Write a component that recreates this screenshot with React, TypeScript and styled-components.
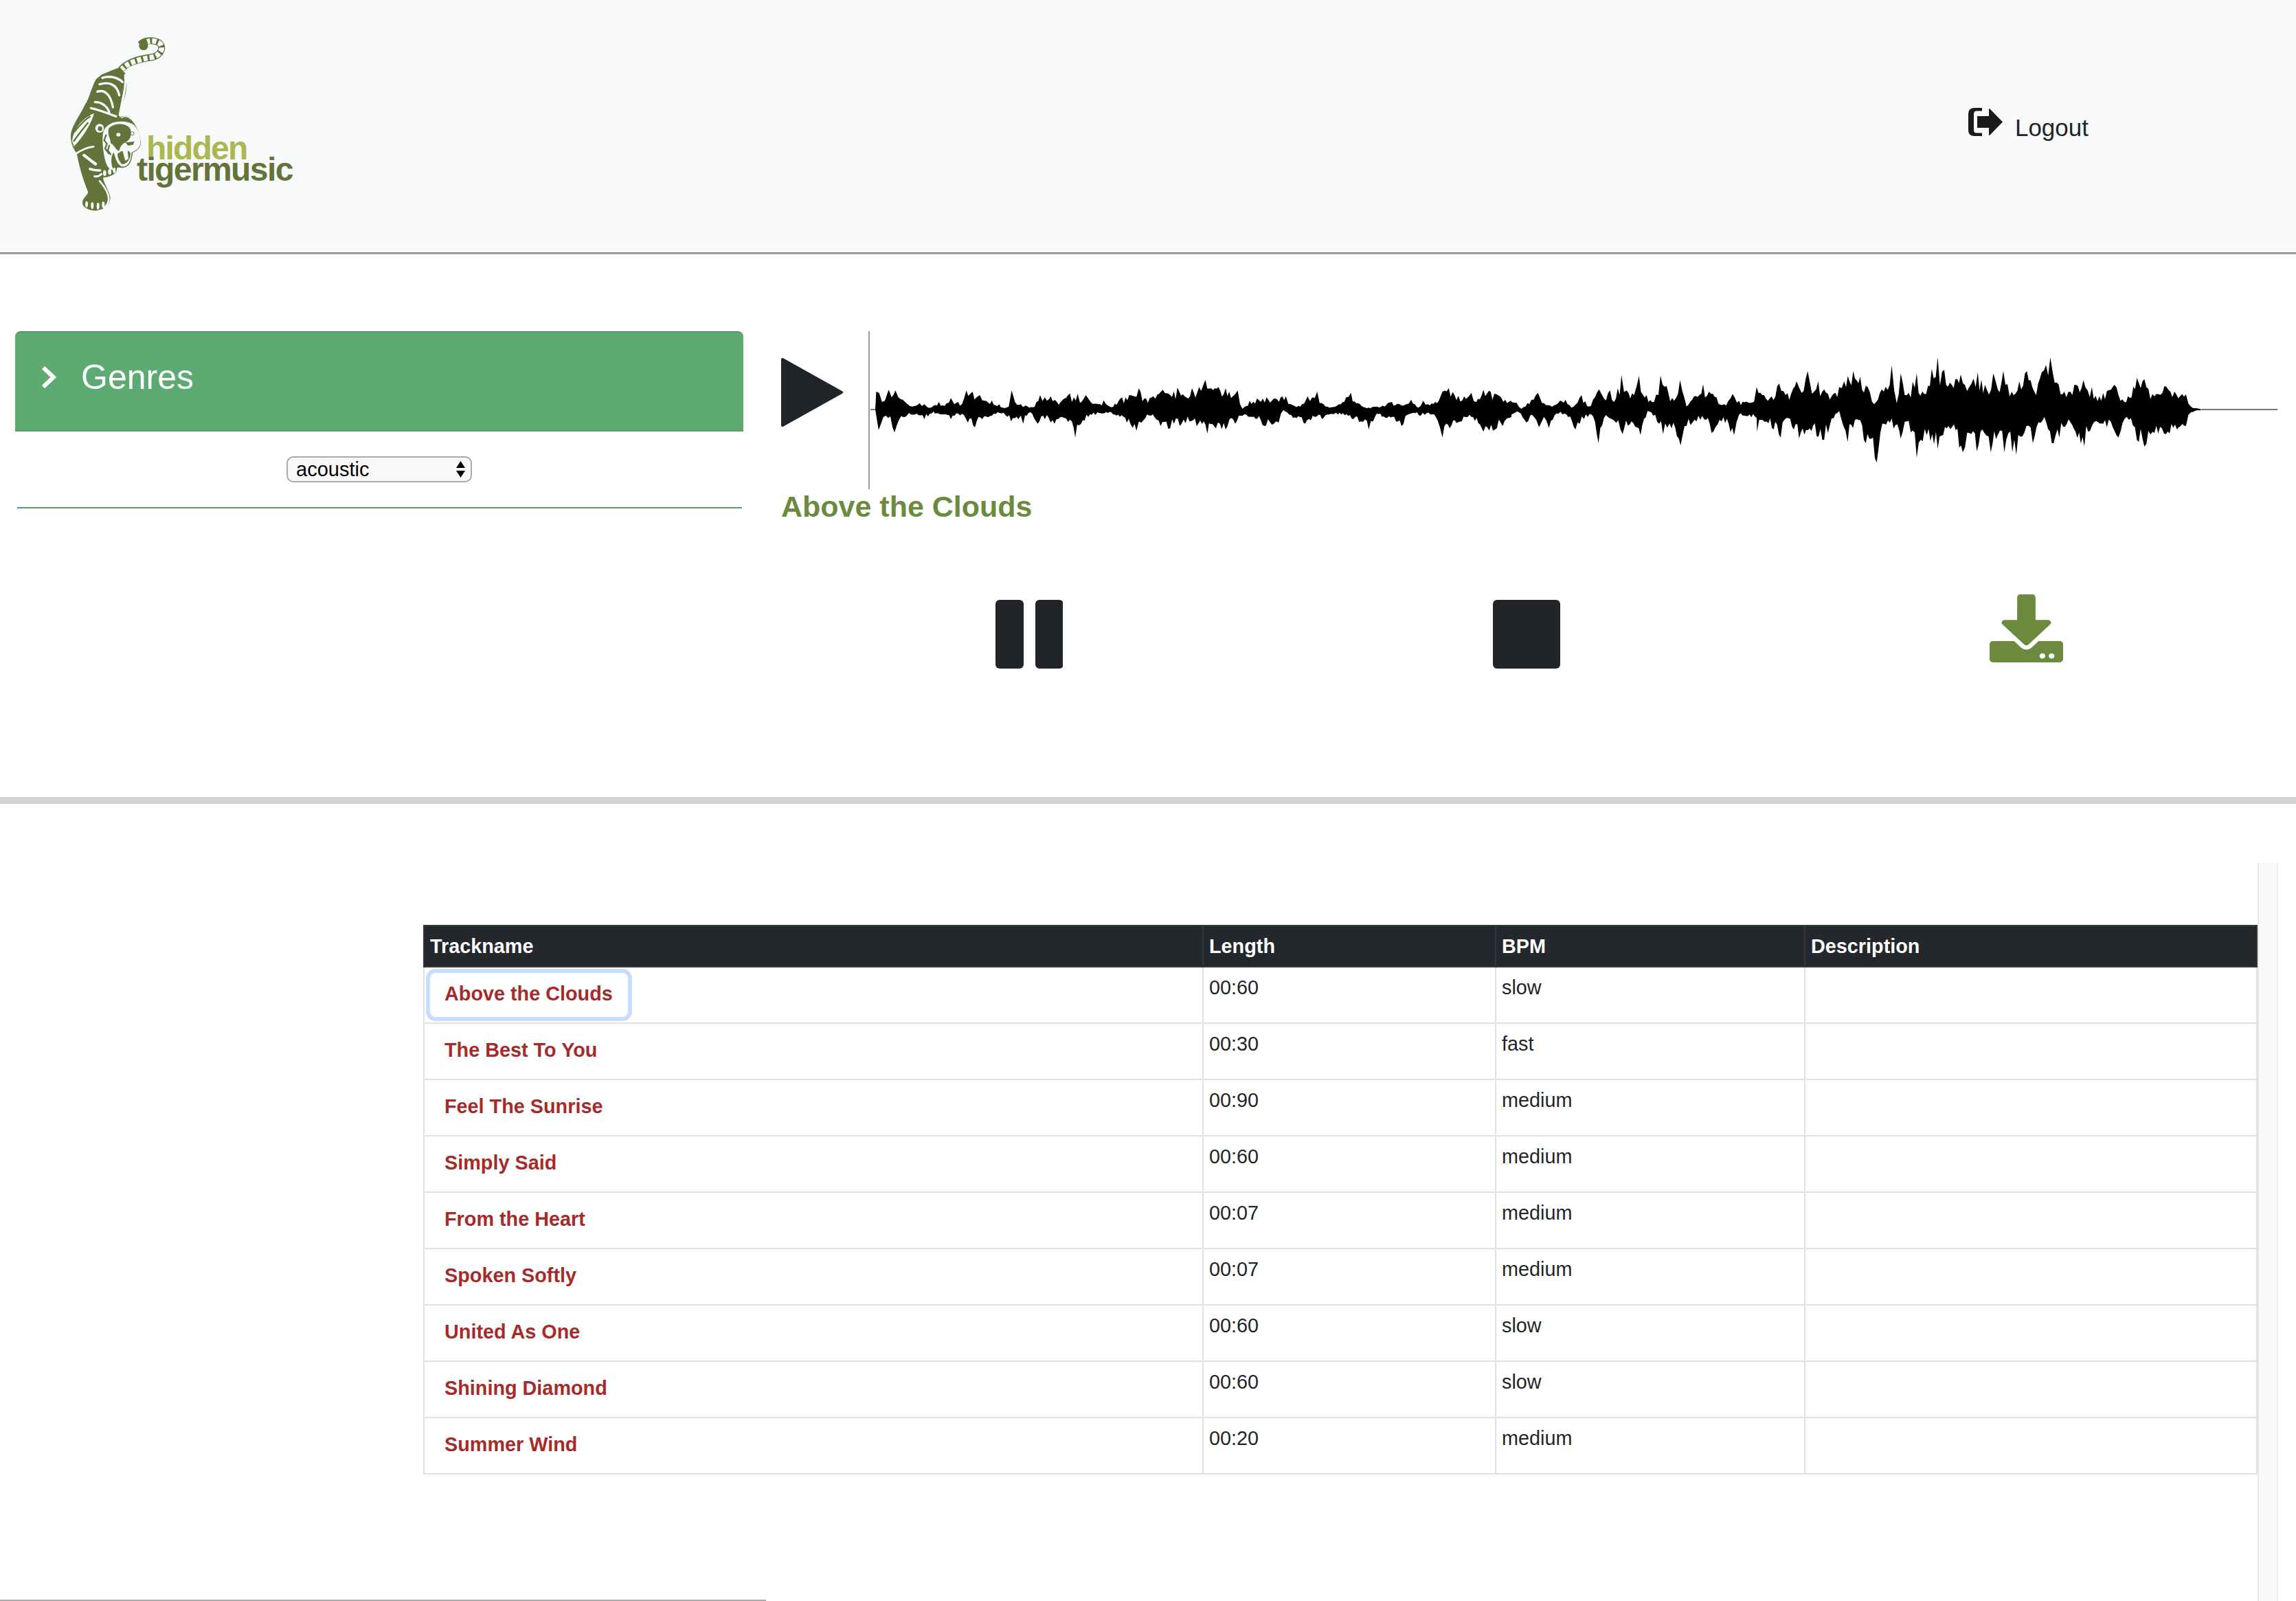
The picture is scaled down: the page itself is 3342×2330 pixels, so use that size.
import React from 'react';
import styled, { createGlobalStyle } from 'styled-components';
import { FaDownload } from 'react-icons/fa';

const GlobalStyle = createGlobalStyle`
  html, body {
    margin: 0;
    height: 2330px;
    overflow: hidden;
    background: #fff;
    color: #212529;
    font-family: "Liberation Sans", Arial, sans-serif;
  }
`;

const Page = styled.div`
  width: 3342px;
  height: 2330px;
`;

const Header = styled.header`
  display: flex;
  justify-content: space-between;
  align-items: flex-start;
  box-sizing: border-box;
  height: 370px;
  padding: 50px 302px 0 95px;
  background: #f8f9fa;
  border-bottom: 3px solid #999;
`;

const LogoMark = styled.svg`
  display: block;
  width: 340px;
  height: 265px;
`;

const LogoWord = styled.text<{ $light?: boolean }>`
  font-family: "Liberation Sans", Arial, sans-serif;
  font-size: 48px;
  font-weight: 700;
  letter-spacing: ${(p) => (p.$light ? '-1.8px' : '-1.6px')};
  fill: ${(p) => (p.$light ? '#abb852' : '#64733a')};
`;

const LogoutLink = styled.a`
  display: inline-flex;
  align-items: baseline;
  gap: 18px;
  margin-top: 107px;
  color: #212529;
  font-size: 35px;
  line-height: 51px;
  cursor: pointer;
`;

const LogoutIcon = styled.svg`
  width: 50px;
  height: 41px;
  margin-bottom: -1px;
  fill: #1a1a1a;
`;

const PlayerSection = styled.section`
  display: flex;
  align-items: flex-start;
  box-sizing: border-box;
  height: 800px;
  padding: 112px 0 0 22px;
  border-bottom: 10px solid #d3d3d3;
`;

const GenreColumn = styled.div`
  flex: none;
  width: 1060px;
`;

const GenrePanel = styled.div`
  display: flex;
  align-items: flex-start;
  gap: 36px;
  box-sizing: border-box;
  height: 146px;
  padding: 35px 0 0 38px;
  background: #5eaa73;
  border-top: 2px solid #569a68;
  border-bottom: 2px solid #569a68;
  border-radius: 8px 8px 0 0;
  color: #fff;
  font-size: 50px;
  line-height: 60px;
`;

const Chevron = styled.svg`
  width: 22px;
  height: 32px;
  margin-top: 14px;
  fill: none;
  stroke: #fff;
  stroke-width: 6;
`;

const SelectRow = styled.div`
  display: flex;
  justify-content: center;
  margin-top: 36px;
`;

const SelectBox = styled.div`
  position: relative;
  width: 270px;
  height: 38px;
`;

const GenreSelect = styled.select`
  appearance: none;
  box-sizing: border-box;
  width: 100%;
  height: 100%;
  padding: 0 0 0 12px;
  background: #f8f8f8;
  border: 2px solid #aaa;
  border-radius: 10px;
  color: #000;
  font-family: "Liberation Sans", Arial, sans-serif;
  font-size: 29px;
`;

const SelectArrows = styled.svg`
  position: absolute;
  top: 7px;
  right: 9px;
  width: 15px;
  height: 24px;
  pointer-events: none;
`;

const GreenRule = styled.div`
  height: 2px;
  margin: 36px 2px 0 3px;
  background: #5c9e6c;
`;

const PlayerColumn = styled.div`
  flex: none;
  width: 2178px;
  margin-left: 55px;
`;

const WaveRow = styled.div`
  display: flex;
  height: 230px;
`;

const PlayIcon = styled.svg`
  flex: none;
  width: 90px;
  height: 100px;
  margin: 39px 37px 0 0;
  fill: #212529;
  stroke: #212529;
  stroke-width: 4;
  stroke-linejoin: round;
`;

const WaveFrame = styled.div`
  border-left: 2px solid #999;
`;

const WaveSvg = styled.svg`
  display: block;
  width: 2048px;
  height: 230px;
  margin-left: 1px;
`;

const TrackTitle = styled.h2`
  margin: 0;
  color: #6b8a3e;
  font-size: 43px;
  font-weight: 700;
  line-height: 50px;
`;

const Controls = styled.div`
  display: grid;
  grid-template-columns: repeat(3, 726px);
  justify-items: center;
  align-items: start;
  margin: 111px 0 0 -3px;
`;

const TransportIcon = styled.svg`
  display: block;
  width: 100px;
  height: 100px;
  fill: #212529;
`;

const DownloadIcon = styled(FaDownload)`
  display: block;
  width: 107px;
  height: 99px;
  margin-top: -8px;
  color: #6b8a3e;
`;

const TrackSection = styled.section`
  display: grid;
  grid-template-columns: 3286px 30px;
  grid-template-rows: 1fr 2px;
  height: 1074px;
  margin-top: 86px;
`;

const TableWrap = styled.div`
  padding: 90px 0 0 616px;
`;

const FootRule = styled.div`
  grid-row: 2;
  width: 1115px;
  background: #aaa;
`;

const ScrollTrack = styled.div`
  grid-column: 2;
  grid-row: 1 / 3;
  box-sizing: border-box;
  background: #fafafa;
  border-left: 2px solid #e8e8e8;
  border-right: 2px solid #eee;
`;

const TrackTable = styled.table`
  width: 2670px;
  table-layout: fixed;
  border-collapse: separate;
  border-spacing: 0;
  font-size: 28.8px;
  line-height: 42px;
`;

const HeadCell = styled.th<{ $width: number }>`
  box-sizing: border-box;
  width: ${(p) => p.$width}px;
  height: 62px;
  padding: 0 8px;
  background: #24282c;
  border: 2px solid #32383e;
  border-right-width: 0;
  color: #fff;
  font-weight: 700;
  text-align: left;

  &:last-child {
    border-right-width: 2px;
  }
`;

const Cell = styled.td`
  box-sizing: border-box;
  height: 82px;
  padding: 8px;
  vertical-align: top;
  border-left: 2px solid #dee2e6;
  border-bottom: 2px solid #dee2e6;

  &:last-child {
    border-right: 2px solid #dee2e6;
  }
`;

const TrackButton = styled.button<{ $focused?: boolean }>`
  display: block;
  box-sizing: border-box;
  height: 64px;
  padding: 0 22px 4px 21px;
  background: #fff;
  border: 0;
  border-radius: 8px;
  box-shadow: ${(p) => (p.$focused ? '0 0 0 6px #c8dcfd' : 'none')};
  color: #a52a2a;
  font-family: "Liberation Sans", Arial, sans-serif;
  font-size: 28.8px;
  font-weight: 700;
`;

const columns = [
  { title: 'Trackname', width: 1134 },
  { title: 'Length', width: 426 },
  { title: 'BPM', width: 450 },
  { title: 'Description', width: 660 },
];

const tracks = [
  { name: 'Above the Clouds', length: '00:60', bpm: 'slow' },
  { name: 'The Best To You', length: '00:30', bpm: 'fast' },
  { name: 'Feel The Sunrise', length: '00:90', bpm: 'medium' },
  { name: 'Simply Said', length: '00:60', bpm: 'medium' },
  { name: 'From the Heart', length: '00:07', bpm: 'medium' },
  { name: 'Spoken Softly', length: '00:07', bpm: 'medium' },
  { name: 'United As One', length: '00:60', bpm: 'slow' },
  { name: 'Shining Diamond', length: '00:60', bpm: 'slow' },
  { name: 'Summer Wind', length: '00:20', bpm: 'medium' },
];

// envelope of the waveform, as [x, y] pairs read off two crops of the track
const upperA = [248,408,250,330,256,335,262,375,268,370,272,345,276,322,282,355,290,325,296,355,305,365,315,385,325,395,340,380,350,385,365,398,380,375,392,392,405,358,412,385,420,375,428,385,437,325,445,340,450,330,458,355,465,345,475,370,490,368,505,385,520,400,525,395,531,325,538,375,550,385,560,390,575,398,590,345,600,355,612,350,625,375,640,360,652,338,660,355,668,340,678,370,685,345,695,375,710,385,722,368,738,398,760,355,775,345,785,350,795,315,810,360,825,350,845,322,860,345,875,312,890,350,905,315,920,310,933,278,945,315,960,310,975,315,990,350,1000,325,1010,405,1025,370,1040,360,1060,355,1075,360,1100,350,1110,385,1130,395,1145,350,1155,355,1165,330,1175,380,1190,400,1210,385,1225,355,1235,335,1250,380,1265,400,1290,395,1320,375,1350,385,1360,365,1375,400,1385,370,1395,385,1410,375,1425,330,1438,315,1450,345,1470,350,1485,335,1495,375,1510,322,1525,330,1540,345,1555,365,1568,370];
const lowerA = [248,408,255,497,265,440,275,445,288,508,298,450,310,440,330,430,350,450,365,425,390,430,405,450,420,425,440,465,455,485,470,450,490,435,510,425,530,460,545,450,555,470,570,420,585,470,600,450,620,470,640,445,660,490,663,530,675,470,690,440,720,425,745,430,770,465,790,500,800,465,820,435,840,480,860,490,880,480,900,460,915,480,937,513,955,490,975,495,995,470,1010,435,1030,440,1055,480,1075,470,1085,465,1095,410,1115,445,1140,470,1160,440,1175,450,1190,430,1215,430,1240,450,1272,495,1285,440,1310,445,1340,480,1360,425,1380,435,1400,430,1415,455,1425,530,1440,490,1465,460,1485,440,1510,505,1530,500,1550,480,1568,440];
const upperB = [0,375,10,378,20,405,40,365,53,335,65,380,85,390,97,370,108,365,120,400,140,345,155,395,175,320,185,360,197,325,205,375,220,258,230,325,245,345,255,262,270,345,285,375,298,260,310,305,325,370,337,280,350,395,365,350,383,298,395,330,410,355,425,385,442,340,455,370,480,378,490,310,505,345,520,350,535,295,548,345,570,285,580,335,592,240,605,330,613,285,625,320,640,350,655,310,665,285,683,240,697,265,712,310,725,385,740,320,760,215,770,380,778,250,790,345,810,250,825,340,840,230,852,180,865,235,880,300,898,255,915,310,932,245,950,320,963,250,972,320,983,240,1000,330,1015,285,1030,240,1045,330,1060,245,1077,180,1090,290,1105,330,1125,300,1143,280,1160,310,1175,350,1205,300,1225,375,1250,270,1265,275,1285,350,1305,305,1325,330,1348,342,1358,395,1375,405,1382,408];
const lowerB = [0,430,15,420,30,465,45,440,55,485,65,440,75,488,90,425,110,430,128,495,145,450,160,430,174,555,185,445,205,455,222,515,240,460,258,520,272,415,295,470,303,515,320,490,338,565,350,480,370,460,385,450,400,510,420,460,445,520,455,430,490,445,491,505,510,460,538,530,550,445,575,535,610,525,625,540,655,415,672,550,690,450,708,555,730,640,745,470,775,500,778,535,790,460,810,618,830,520,852,580,870,490,902,595,915,510,930,590,945,510,958,595,972,520,985,595,1009,605,1025,510,1042,555,1065,440,1080,555,1095,530,1110,470,1145,570,1160,480,1190,485,1213,530,1230,440,1250,540,1265,570,1285,510,1308,515,1330,495,1348,480,1358,420,1375,412,1382,408];

const CENTER_Y = 114;

type Point = [number, number];

const readCrop = (pairs: number[], originX: number, scaleX: number) => {
  const points: Point[] = [];
  for (let i = 0; i < pairs.length; i += 2) {
    points.push([originX + pairs[i] / scaleX - 1265, pairs[i + 1] / 3 - 22]);
  }
  return points;
};

const noise = (i: number) => {
  const v = Math.sin(i * 12.9898) * 43758.5453;
  return v - Math.floor(v);
};

// the envelope only has the big peaks, add the fine grain of the audio between them
const roughen = (points: Point[], seed: number) => {
  const out: Point[] = [];
  points.forEach(([x, y], i) => {
    out.push([x, y]);
    const next = points[i + 1];
    if (!next || next[0] - x < 4) return;
    const steps = Math.floor((next[0] - x) / 2.5);
    for (let s = 1; s < steps; s++) {
      const t = s / steps;
      const envelope = y + (next[1] - y) * t;
      const grain = 0.5 + 0.55 * noise(seed + out.length);
      out.push([x + (next[0] - x) * t, CENTER_Y + (envelope - CENTER_Y) * grain]);
    }
  });
  return out;
};

const upper = roughen([...readCrop(upperA, 1100, 1.4255), ...readCrop(upperB, 2200, 1.373)], 3);
const lower = roughen([...readCrop(lowerA, 1100, 1.4255), ...readCrop(lowerB, 2200, 1.373)], 711);
const wavePath =
  'M' +
  [...upper, ...lower.reverse()].map(([x, y]) => `${x.toFixed(1)} ${y.toFixed(1)}`).join('L') +
  'Z';

const TIGER_BG = '#f8f9fa';
const TIGER = '#64733a';

const Tiger: React.FC = () => (
  <g transform="scale(0.3333)">
    <path
      d="M240 160C262 122 320 108 380 100C420 90 432 55 410 37C385 22 345 25 328 45"
      fill="none"
      stroke={TIGER}
      strokeWidth="30"
    />
    <path
      d="M244 158C266 124 320 110 380 100C420 90 432 55 410 37C390 26 372 27 358 32"
      fill="none"
      stroke={TIGER_BG}
      strokeWidth="23"
      strokeDasharray="19 9"
    />
    <ellipse cx="342" cy="50" rx="20" ry="19" fill={TIGER} />
    <path
      fill={TIGER}
      d="M160 175C190 165 215 150 240 145L262 170C270 210 272 240 255 290C245 320 240 345 238 365C250 350 285 355 290 375C310 395 325 430 330 470C332 490 315 510 295 515C290 550 285 575 255 582C240 585 225 575 225 590C225 610 190 625 165 625C165 645 190 680 197 712C195 740 180 765 130 770C100 768 75 755 75 735C75 715 95 705 100 690C85 650 65 600 50 520C35 500 20 470 25 430C35 390 60 360 85 310C105 280 115 230 135 195Z"
    />
    {/* back stripes */}
    <g fill="none" stroke={TIGER_BG} strokeWidth="10" strokeLinecap="round">
      <path d="M162 190C190 180 228 186 250 208" />
      <path d="M150 218C185 208 224 212 236 266" />
      <path d="M140 250C172 240 198 262 208 318" />
      <path d="M130 296C155 294 182 312 192 340" />
      <path d="M112 322C150 330 185 345 222 358" />
      <path d="M262 178C268 230 250 280 238 352" />
      <path d="M48 520C78 500 100 492 124 490" strokeWidth="8" />
      <path d="M82 528C98 540 112 552 132 566" strokeWidth="13" />
      <path d="M108 588C122 592 135 595 152 594" strokeWidth="11" />
      <path d="M128 620C138 622 148 620 158 610" strokeWidth="9" />
      <path d="M150 640C172 665 190 690 190 720C188 738 180 750 170 757" strokeWidth="8" />
    </g>
    {/* haunch */}
    <path fill={TIGER_BG} d="M30 465C36 412 75 365 126 345C112 392 82 442 38 490Z" />
    <g fill="none" stroke={TIGER} strokeWidth="7">
      <path d="M36 430C60 400 85 372 110 358" />
      <path d="M36 468C58 435 80 410 100 385" />
    </g>
    {/* face */}
    <path
      fill={TIGER_BG}
      d="M165 430C172 405 185 398 195 392C225 375 272 378 300 395C325 420 330 460 328 480C320 505 300 510 290 515C285 560 275 575 250 578C225 570 218 535 212 515C198 530 198 565 210 590C198 598 178 575 172 540C165 505 160 465 165 430Z"
    />
    <path
      fill={TIGER}
      d="M190 410C215 385 270 385 285 415C290 440 285 460 265 470C245 480 240 490 235 510C220 505 212 480 198 475C198 450 182 440 190 410Z"
    />
    <g fill="none" stroke={TIGER} strokeWidth="7" strokeLinecap="round">
      <path d="M178 440L170 462L182 478L174 498L190 520" />
      <path d="M192 486L186 506L198 524" />
    </g>
    <circle cx="150" cy="410" r="19" fill={TIGER_BG} />
    <circle cx="152" cy="412" r="10" fill={TIGER} />
    <path d="M245 365C255 355 280 358 287 372" fill="none" stroke={TIGER_BG} strokeWidth="4" />
    <ellipse cx="232" cy="438" rx="9" ry="8" fill={TIGER_BG} />
    <circle cx="292" cy="433" r="8" fill="none" stroke={TIGER} strokeWidth="3" />
    <path fill={TIGER} d="M262 472L302 468L296 482L275 486Z" />
    <path fill={TIGER} d="M228 522C245 505 280 500 285 520C285 545 270 565 250 568C238 560 228 540 228 522Z" />
    <path fill={TIGER_BG} d="M250 506L262 552L276 544L272 504Z" />
    {/* toes */}
    <g fill={TIGER_BG}>
      <ellipse cx="172" cy="606" rx="7" ry="13" />
      <ellipse cx="194" cy="600" rx="7" ry="13" />
      <ellipse cx="214" cy="594" rx="6" ry="12" />
      <ellipse cx="93" cy="742" rx="6" ry="14" />
      <ellipse cx="118" cy="748" rx="6" ry="15" />
      <ellipse cx="143" cy="750" rx="6" ry="15" />
      <ellipse cx="166" cy="744" rx="6" ry="14" />
    </g>
  </g>
);

const App: React.FC = () => {
  return (
    <Page>
      <GlobalStyle />
      <Header>
        <LogoMark viewBox="0 0 340 265">
          <Tiger />
          <LogoWord $light x="118" y="182">hidden</LogoWord>
          <LogoWord x="104" y="213">tigermusic</LogoWord>
        </LogoMark>
        <LogoutLink>
          <LogoutIcon viewBox="0 0 50 41">
            <path d="M20 0H9Q0 0 0 9V32Q0 41 9 41H20V36.5H12Q8 36.5 8 32V9Q8 4.5 12 4.5H20Z" />
            <path d="M13 12H30V2Q30 0 32 2L50 20.5L32 39Q30 41 30 39V29H13Z" />
          </LogoutIcon>
          Logout
        </LogoutLink>
      </Header>

      <PlayerSection>
        <GenreColumn>
          <GenrePanel>
            <Chevron viewBox="0 0 22 32">
              <polyline points="3,2 18,16 3,30" />
            </Chevron>
            Genres
          </GenrePanel>
          <SelectRow>
            <SelectBox>
              <GenreSelect defaultValue="acoustic">
                <option value="acoustic">acoustic</option>
              </GenreSelect>
              <SelectArrows viewBox="0 0 15 24">
                <path d="M7.5 0L14 10H1Z M7.5 24L1 14H14Z" fill="#000" />
              </SelectArrows>
            </SelectBox>
          </SelectRow>
          <GreenRule />
        </GenreColumn>

        <PlayerColumn>
          <WaveRow>
            <PlayIcon viewBox="0 0 90 100">
              <polygon points="2,2 88,50 2,98" />
            </PlayIcon>
            <WaveFrame>
              <WaveSvg viewBox="2 0 2048 230">
                <path d={`M2 ${CENTER_Y}H14M1940 ${CENTER_Y}H2050`} stroke="#777" strokeWidth="2" />
                <path d={wavePath} fill="#000" />
              </WaveSvg>
            </WaveFrame>
          </WaveRow>
          <TrackTitle>Above the Clouds</TrackTitle>
          <Controls>
            <TransportIcon viewBox="0 0 100 100">
              <rect x="2" width="41" height="100" rx="6" />
              <rect x="60" width="41" height="100" rx="6" />
            </TransportIcon>
            <TransportIcon viewBox="0 0 100 100">
              <rect x="0" width="98" height="100" rx="6" />
            </TransportIcon>
            <DownloadIcon preserveAspectRatio="none" />
          </Controls>
        </PlayerColumn>
      </PlayerSection>

      <TrackSection>
        <TableWrap>
          <TrackTable>
            <thead>
              <tr>
                {columns.map((column) => (
                  <HeadCell key={column.title} $width={column.width}>{column.title}</HeadCell>
                ))}
              </tr>
            </thead>
            <tbody>
              {tracks.map((track, index) => (
                <tr key={track.name}>
                  <Cell>
                    <TrackButton $focused={index === 0}>{track.name}</TrackButton>
                  </Cell>
                  <Cell>{track.length}</Cell>
                  <Cell>{track.bpm}</Cell>
                  <Cell />
                </tr>
              ))}
            </tbody>
          </TrackTable>
        </TableWrap>
        <FootRule />
        <ScrollTrack />
      </TrackSection>
    </Page>
  );
};

export default App;
